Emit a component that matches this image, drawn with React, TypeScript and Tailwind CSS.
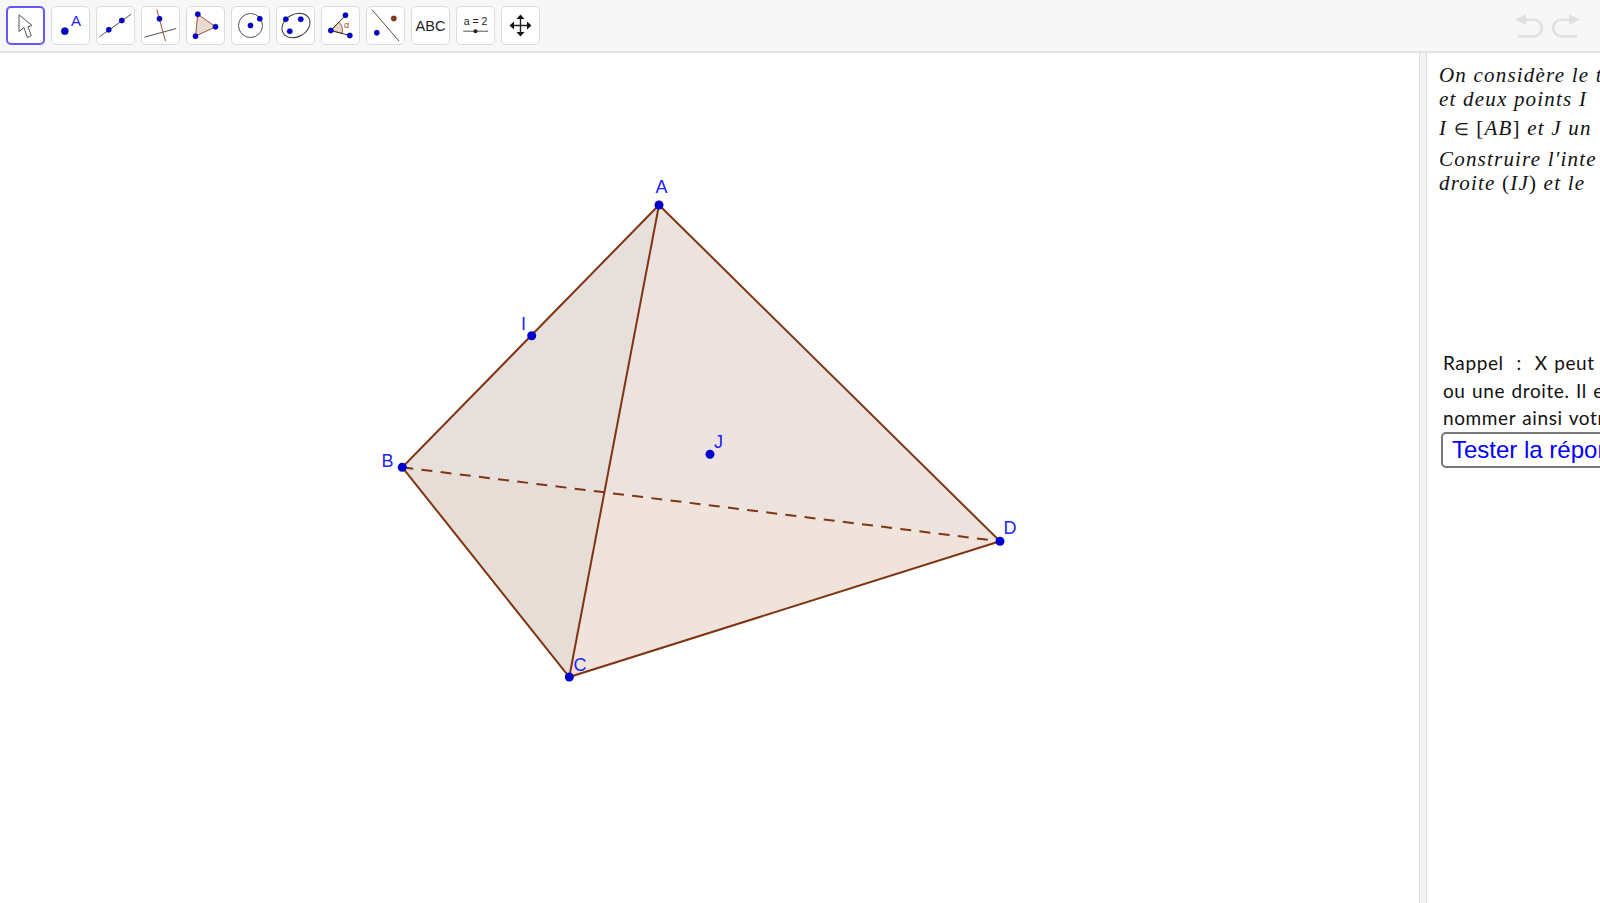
import React from "react";

const BLUE = "#0000d8";
const BROWN = "#a0522d";
const GRAY = "#555";

const Dot = ({ x, y, r = 2.7, c = BLUE }: { x: number; y: number; r?: number; c?: string }) => (
  <circle cx={x} cy={y} r={r} fill={c} stroke="#222" strokeWidth={0.3} />
);

const Btn = ({ active, children }: { active?: boolean; children: React.ReactNode }) => (
  <div
    className={
      active
        ? "h-[39px] w-[39px] shrink-0 rounded-[5px] border-2 border-[#6557ff] bg-white"
        : "h-[39px] w-[39px] shrink-0 rounded-[5px] border border-[#dcdcdc] bg-white"
    }
  >
    <svg viewBox="0 0 39 39" className={active ? "-m-[2px] block h-[39px] w-[39px]" : "-m-px block h-[39px] w-[39px]"}>
      {children}
    </svg>
  </div>
);

const Undo = ({ flip }: { flip?: boolean }) => (
  <svg viewBox="0 0 28 24" className={flip ? "h-[24px] w-[28px] -scale-x-100" : "h-[24px] w-[28px]"}>
    <path d="M0 5.5 L11 0 V11 Z" fill="#e0e0e0" />
    <path d="M10 5.7 H18.5 A8 8 0 0 1 18.5 22.4 H3" fill="none" stroke="#e0e0e0" strokeWidth="2.6" />
  </svg>
);

const A = { x: 659, y: 205 };
const I = { x: 531.7, y: 335.7 };
const B = { x: 402.3, y: 467.3 };
const C = { x: 569.3, y: 677 };
const D = { x: 1000, y: 541.3 };
const J = { x: 710, y: 454.3 };
const X = { x: 604.5, y: 492.5 };
const p = (...a: { x: number; y: number }[]) => a.map((q) => `${q.x},${q.y}`).join(" ");

const Lbl = ({ x, y, t }: { x: number; y: number; t: string }) => (
  <text x={x} y={y} fill="#2222ff" fontSize="18" fontFamily="'Liberation Sans', sans-serif">
    {t}
  </text>
);

export default function App() {
  const serif = "whitespace-nowrap font-['Liberation_Serif',serif] text-[21px] italic leading-[24px] tracking-[1.2px] text-[#111]";
  const sans = "whitespace-nowrap font-['Lato',sans-serif] text-[19px] leading-[27.5px] tracking-[0.6px] [word-spacing:1px] text-[#111]";
  return (
    <div className="flex h-screen w-full flex-col overflow-hidden bg-white">
      <header className="flex h-[53px] shrink-0 items-center gap-[6px] border-b-2 border-[#e4e4e4] bg-[#f7f7f7] pl-[5.5px] pr-[20px]">
        <Btn active>
          <path d="M13 8.8 L13 25.5 L18 21.5 L21.3 31.5 L25.3 29.8 L22 20.8 L26 19.5 Z" fill="#fff" stroke="#555" strokeWidth="1" strokeLinejoin="round" />
        </Btn>
        <Btn>
          <circle cx="13.8" cy="25.2" r="3.6" fill={BLUE} stroke="#222" strokeWidth="0.4" />
          <text x="20" y="20" fill="#2222ff" fontSize="15" fontFamily="'Liberation Sans', sans-serif">A</text>
        </Btn>
        <Btn>
          <line x1="3.5" y1="30.8" x2="35.2" y2="8.2" stroke={GRAY} strokeWidth="1" />
          <Dot x={12.8} y={23.8} />
          <Dot x={25.8} y={14.5} />
        </Btn>
        <Btn>
          <line x1="15.8" y1="3.5" x2="24.5" y2="35.2" stroke={BROWN} strokeWidth="1" />
          <line x1="3.5" y1="31.2" x2="35.2" y2="22.5" stroke={GRAY} strokeWidth="1" />
          <Dot x={18.5} y={12.8} />
        </Btn>
        <Btn>
          <polygon points="11.8,8.2 29.5,20.8 9.5,30.2" fill="#e8dbd4" stroke={BROWN} strokeWidth="1" />
          <Dot x={11.8} y={8.2} />
          <Dot x={29.5} y={20.8} />
          <Dot x={9.5} y={30.2} />
        </Btn>
        <Btn>
          <circle cx="19.5" cy="19.5" r="12" fill="none" stroke={GRAY} strokeWidth="1" />
          <Dot x={19.5} y={19.5} />
          <Dot x={28.8} y={12.8} />
        </Btn>
        <Btn>
          <ellipse cx="20" cy="19.5" rx="14.8" ry="11.2" transform="rotate(-30 20 19.5)" fill="none" stroke="#333" strokeWidth="1" />
          <Dot x={9.8} y={13.2} />
          <Dot x={13.8} y={25.2} />
          <Dot x={24.8} y={13.2} />
        </Btn>
        <Btn>
          <path d="M9.8 24.5 L17.9 16.1 A11.7 11.7 0 0 1 21.1 27.4 Z" fill="#e8d5ca" stroke={BROWN} strokeWidth="0.9" />
          <line x1="9.8" y1="24.5" x2="24.5" y2="9.2" stroke="#333" strokeWidth="1" />
          <line x1="9.8" y1="24.5" x2="28.8" y2="29.5" stroke="#333" strokeWidth="1" />
          <text x="23" y="22" fill={BROWN} fontSize="9" fontFamily="'Liberation Sans', sans-serif">α</text>
          <Dot x={9.8} y={24.5} />
          <Dot x={24.5} y={9.2} />
          <Dot x={28.8} y={29.5} />
        </Btn>
        <Btn>
          <line x1="5.8" y1="3.5" x2="33.2" y2="35.2" stroke={GRAY} strokeWidth="1" />
          <Dot x={27.8} y={12.5} c="#8b3a12" />
          <Dot x={10.8} y={26.8} />
        </Btn>
        <Btn>
          <text x="19.5" y="25" textAnchor="middle" fill="#222" fontSize="14.5" fontFamily="'Liberation Sans', sans-serif">ABC</text>
        </Btn>
        <Btn>
          <text x="19.5" y="18.5" textAnchor="middle" fill="#222" fontSize="10.5" fontFamily="'Liberation Sans', sans-serif">a = 2</text>
          <line x1="7.2" y1="25.2" x2="32.2" y2="25.2" stroke={GRAY} strokeWidth="1" />
          <circle cx="19.5" cy="25.2" r="2" fill="#222" />
        </Btn>
        <Btn>
          <path d="M10 19.5 H29 M19.5 10 V29" stroke="#222" strokeWidth="1.4" />
          <path d="M8.5 19.5 L13 15.5 V23.5 Z M30.5 19.5 L26 15.5 V23.5 Z M19.5 8.5 L15.5 13 H23.5 Z M19.5 30.5 L15.5 26 H23.5 Z" fill="#111" />
        </Btn>
        <div className="ml-auto flex items-center gap-[9px]">
          <Undo />
          <Undo flip />
        </div>
      </header>
      <main className="flex min-h-0 flex-1">
        <div className="min-w-0 flex-1">
          <svg viewBox="0 53 1419 850" className="block h-full w-full">
            <polygon points={p(A, X, D)} fill="#ede3de" />
            <polygon points={p(X, C, D)} fill="#f0e3dc" />
            <polygon points={p(A, B, X)} fill="#e6dfdb" />
            <polygon points={p(B, C, X)} fill="#e6ddd7" />
            <line x1={B.x} y1={B.y} x2={D.x} y2={D.y} stroke="#7f3412" strokeWidth="2" strokeDasharray="11 8.3" />
            <polyline points={p(A, B, C, D, A)} fill="none" stroke="#7f3412" strokeWidth="2" />
            <line x1={A.x} y1={A.y} x2={C.x} y2={C.y} stroke="#7f3412" strokeWidth="2" />
            {[A, I, B, C, D, J].map((q, i) => (
              <circle key={i} cx={q.x} cy={q.y} r="4.5" fill="#0000cc" />
            ))}
            <Lbl x={655.5} y={193} t="A" />
            <Lbl x={521} y={330} t="I" />
            <Lbl x={381.5} y={467} t="B" />
            <Lbl x={573.5} y={671} t="C" />
            <Lbl x={1003.5} y={534} t="D" />
            <Lbl x={714} y={448} t="J" />
          </svg>
        </div>
        <div className="w-[8px] shrink-0 border-x border-[#dedede] bg-[#f3f3f3]" />
        <aside className="w-[173px] shrink-0 overflow-hidden bg-white">
          <div className="pl-[12px] pt-[10px]">
            <p className={serif}>On considère le t</p>
            <p className={serif}>et deux points I</p>
            <p className={`${serif} mt-[5px]`}>
              I <span className="text-[17px] not-italic">∈</span> <span className="not-italic">[</span>AB<span className="not-italic">]</span> et J un
            </p>
            <p className={`${serif} mt-[5px]`}>Construire l'inte</p>
            <p className={serif}>
              droite <span className="not-italic">(</span>IJ<span className="not-italic">)</span> et le
            </p>
          </div>
          <div className="mt-[154px] pl-[16px]">
            <p className={sans}>Rappel&nbsp; :&nbsp; X peut</p>
            <p className={sans}>ou une droite. Il e</p>
            <p className={sans}>nommer ainsi votr</p>
            <div className="-ml-[2px] flex h-[36px] w-[300px] items-center rounded-[5px] border-2 border-[#777] bg-white pl-[9px] font-['Liberation_Sans',sans-serif] text-[24px] text-[#0000ff]">
              Tester la réponse
            </div>
          </div>
        </aside>
      </main>
    </div>
  );
}
